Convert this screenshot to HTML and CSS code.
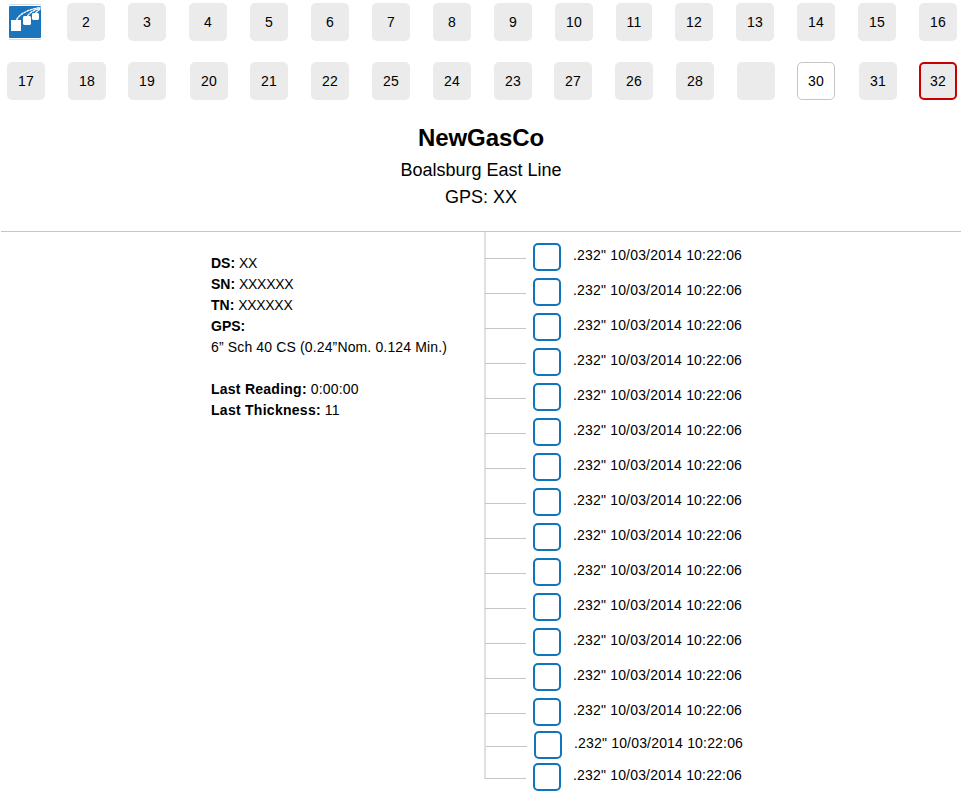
FILE: index.html
```
<!DOCTYPE html>
<html lang="en">
<head>
<meta charset="utf-8">
<title>NewGasCo</title>
<link rel="stylesheet" href="styles.css">
</head>
<body>
<nav class="tiles">
  <div class="tile-row">
    <div class="logo"><svg width="38" height="38" viewBox="0 0 38 38">
      <path d="M3 1.5H35M3 36.5H35" stroke="#ddd"/>
      <rect x="3" y="3" width="32" height="32" rx="1" fill="#1b75bc"/>
      <path d="M10.500 17C14 10 24 6 34.500 4.500M21.500 13C24 9 29 7 34.500 5M29.500 10L34.500 5.500" fill="none" stroke="#fff" stroke-width="1.300" stroke-dasharray="3 .4"/>
      <path d="M5 17H15V28H5ZM18 13H24L25 14V21L24 22H18L17 21V14ZM27 10H32L33 11V16L32 17H27L26 16V11Z" fill="#fff"/>
    </svg></div>
    <div class="tile">2</div><div class="tile">3</div><div class="tile">4</div><div class="tile">5</div><div class="tile">6</div><div class="tile">7</div><div class="tile">8</div><div class="tile">9</div><div class="tile">10</div><div class="tile narrow">11</div><div class="tile">12</div><div class="tile">13</div><div class="tile">14</div><div class="tile">15</div><div class="tile">16</div>
  </div>
  <div class="tile-row second">
    <div class="tile">17</div><div class="tile">18</div><div class="tile tight">19</div><div class="tile loose">20</div><div class="tile tight">21</div><div class="tile">22</div><div class="tile">25</div><div class="tile">24</div><div class="tile">23</div><div class="tile tight">27</div><div class="tile">26</div><div class="tile">28</div><div class="tile"></div><div class="tile tight open">30</div><div class="tile loose">31</div><div class="tile tight alert">32</div>
  </div>
</nav>
<header class="heading">
  <h1>NewGasCo</h1>
  <p class="line-name">Boalsburg East Line</p>
  <p class="gps">GPS: XX</p>
</header>
<main class="content">
  <section class="details">
    <p><b>DS:</b> <span class="code">XX</span></p>
    <p><b>SN:</b> <span class="code">XXXXXX</span></p>
    <p><b>TN:</b> <span class="code">XXXXXX</span></p>
    <p><b>GPS:</b></p>
    <p class="spec">6” Sch 40 CS (0.24”Nom. 0.124 Min.)</p>
    <p class="last"><b>Last Reading:</b> <span>0:00:00</span></p>
    <p class="thickness"><b>Last Thickness:</b> <span>11</span></p>
  </section>
  <ul class="readings">
    <li><i></i><span>.232" 10/03/2014 10:22:06</span></li>
    <li><i></i><span>.232" 10/03/2014 10:22:06</span></li>
    <li><i></i><span>.232" 10/03/2014 10:22:06</span></li>
    <li><i></i><span>.232" 10/03/2014 10:22:06</span></li>
    <li><i></i><span>.232" 10/03/2014 10:22:06</span></li>
    <li><i></i><span>.232" 10/03/2014 10:22:06</span></li>
    <li><i></i><span>.232" 10/03/2014 10:22:06</span></li>
    <li><i></i><span>.232" 10/03/2014 10:22:06</span></li>
    <li><i></i><span>.232" 10/03/2014 10:22:06</span></li>
    <li><i></i><span>.232" 10/03/2014 10:22:06</span></li>
    <li><i></i><span>.232" 10/03/2014 10:22:06</span></li>
    <li><i></i><span>.232" 10/03/2014 10:22:06</span></li>
    <li><i></i><span>.232" 10/03/2014 10:22:06</span></li>
    <li class="short"><i></i><span>.232" 10/03/2014 10:22:06</span></li>
    <li class="indent"><i></i><span>.232" 10/03/2014 10:22:06</span></li>
    <li><i></i><span>.232" 10/03/2014 10:22:06</span></li>
  </ul>
</main>
</body>
</html>
```
FILE: styles.css
```
* { box-sizing: border-box; }
body { min-height: 807px; margin: 0; background: #fff; color: #000; font: 14px/21px "Liberation Sans", Arial, sans-serif; }
h1, p, ul { margin: 0; padding: 0; }

.tile-row { display: flex; gap: 23px; padding: 3px 0 0 6px; }
.tile-row.second { padding: 21px 0 0 7px; }
.tile, .logo { flex: none; width: 38px; height: 38px; }
.tile { border-radius: 5px; background: #ebebeb; text-align: center; line-height: 38px; letter-spacing: .2px; }
.narrow { width: 36px; }
.tight { margin-left: -1px; }
.loose { margin-left: 1px; }
.open { background: #fff; border: 1px solid #c5c5c5; line-height: 36px; }
.alert { border: 2px solid #c90000; line-height: 34px; }
.logo svg { display: block; }

.heading { width: 962px; height: 131px; padding-top: 22px; text-align: center; }
h1 { font-size: 24px; line-height: 32px; letter-spacing: -.1px; }
.heading p { font-size: 18px; line-height: 27px; }
.heading .line-name { height: 30px; padding-top: 3px; }

.content { display: flex; width: 960px; margin-left: 1px; border-top: 1px solid #c5c5c5; }
.details { width: 483px; padding: 21px 0 0 210px; white-space: nowrap; }
.last { margin-top: 21px; }
.details span { letter-spacing: .2px; }
.spec { letter-spacing: .14px; }
.last b { letter-spacing: .25px; }
.thickness b { letter-spacing: .27px; }
.details .code { letter-spacing: -.3px; }

.readings { height: 547px; border-left: 2px solid #e0e0e0; padding-top: 11px; list-style: none; }
.readings li { display: flex; height: 35px; }
.readings li::before { content: ""; width: 41px; height: 1px; margin: 15px 7px 0 -1px; background: #c5c5c5; }
.readings i { width: 28px; height: 28px; margin-right: 12px; border: 2px solid #1175bb; border-radius: 5px; }
.readings span { margin-top: 2px; letter-spacing: .18px; white-space: nowrap; }
.readings .short { height: 33px; }
.readings .indent { height: 32px; padding-left: 1px; }
```
